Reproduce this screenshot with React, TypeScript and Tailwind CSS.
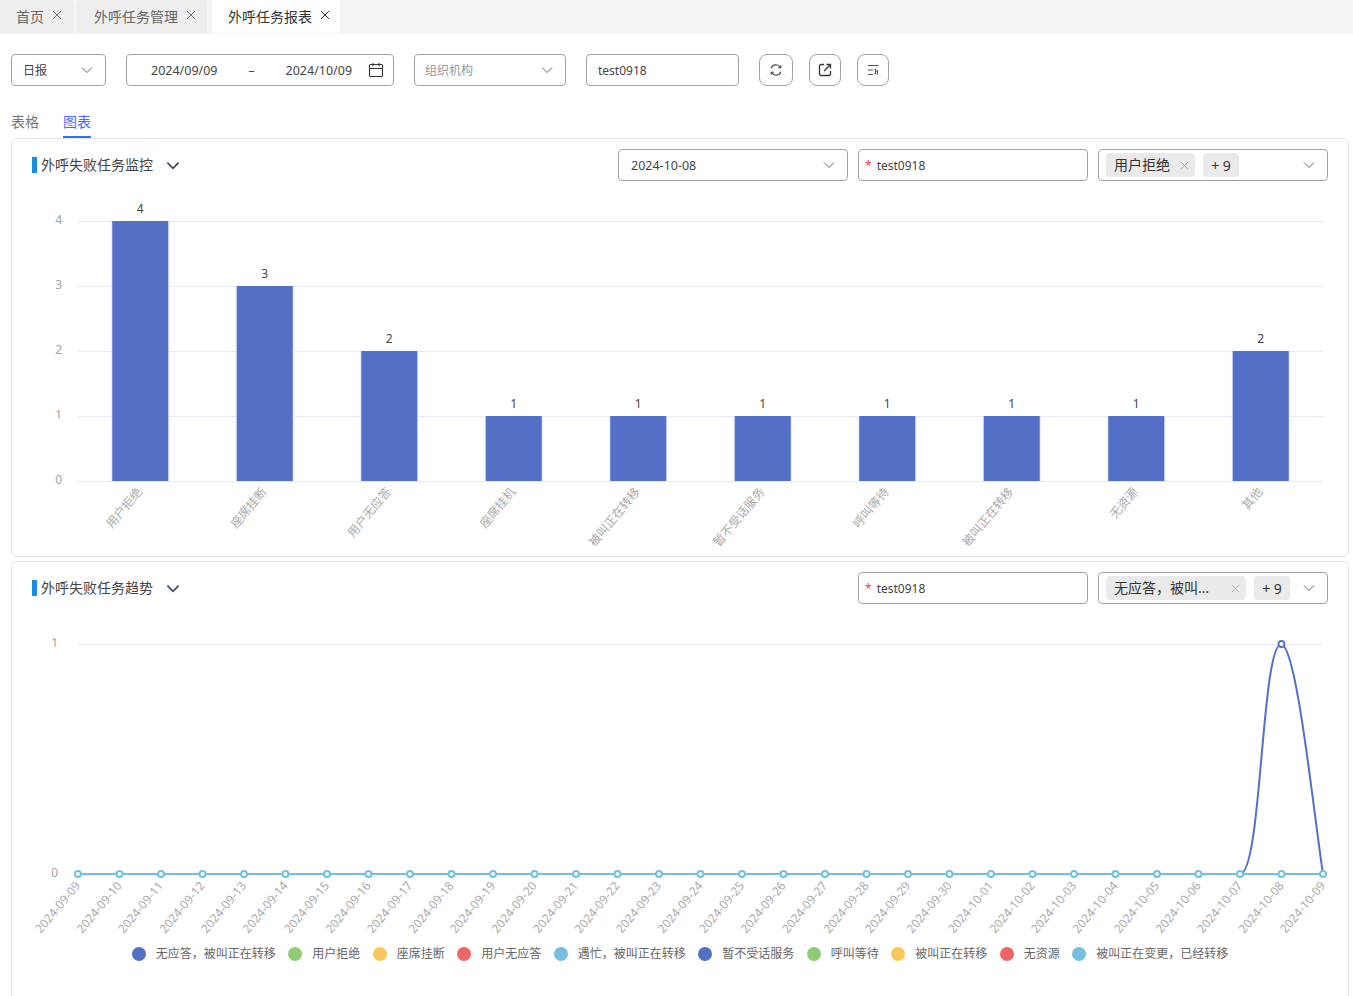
import React from "react";

const FONT = "font-['Noto_Sans','Noto_Sans_CJK_SC',sans-serif]";

const Chevron = ({ className = "w-3 h-3 text-[#666]" }: { className?: string }) => (
  <svg viewBox="0 0 12 8" fill="none" stroke="currentColor" strokeWidth="1" className={className}>
    <path d="M1 1.5 6 6.500 11 1.500" />
  </svg>
);

const Close = ({ className = "w-[10px] h-[10px] text-[#666]" }: { className?: string }) => (
  <svg viewBox="0 0 10 10" fill="none" stroke="currentColor" strokeWidth="1" className={className}>
    <path d="M1 1 9 9M9 1 1 9" />
  </svg>
);

const Tab = ({ label, active, w, pad }: { label: string; active?: boolean; w: string; pad: string }) => (
  <div className={`h-[33px] rounded-t-[3px] flex items-center ${w} ${pad} ${active ? "bg-white text-[#333]" : "bg-[#eeeeee] text-[#666]"}`}>
    <span className="text-[14px] leading-none">{label}</span>
    <Close className={`ml-[8px] w-[10px] h-[10px] -mt-[4px] ${active ? "text-[#333]" : "text-[#777]"}`} />
  </div>
);

const Box = ({ w, className = "", children }: { w: string; className?: string; children: React.ReactNode }) => (
  <div className={`h-8 ${w} border border-[#a3a3a3] rounded-[4px] flex items-center bg-white text-[12px] text-[#444] ${className}`}>{children}</div>
);

const Txt = ({ className = "", children }: { className?: string; children: React.ReactNode }) => (
  <span className={`mt-[2px] ${className}`}>{children}</span>
);

const IconBtn = ({ w, children }: { w: string; children: React.ReactNode }) => (
  <div className={`h-8 ${w} border border-[#a3a3a3] rounded-[8px] flex items-center justify-center text-[#333]`}>{children}</div>
);

const Tag = ({ children, className = "" }: { children: React.ReactNode; className?: string }) => (
  <div className={`h-6 rounded-[4px] bg-[#eaeaea] flex items-center text-[14px] text-[#333] ${className}`}>{children}</div>
);

const Title = ({ label }: { label: string }) => (
  <div className="flex items-center">
    <div className="w-[5px] h-4 bg-[#1d8ce0]" />
    <span className="ml-1 -mt-[2px] text-[14px] text-[#444]">{label}</span>
    <Chevron className="ml-[13px] w-[14px] h-[9px] text-[#3b4a5a] [&>path]:[stroke-width:1.5]" />
  </div>
);

const Required = () => (
  <Box w="w-[230px]" className="pl-[6px]">
    <span className="text-[#f04040] text-[12px] mr-[5px] leading-none mt-[2px]">*</span>
    <Txt>test0918</Txt>
  </Box>
);

const barData = [
  ["用户拒绝", 4], ["座席挂断", 3], ["用户无应答", 2], ["座席挂机", 1], ["被叫正在转移", 1],
  ["暂不受话服务", 1], ["呼叫等待", 1], ["被叫正在转移", 1], ["无资源", 1], ["其他", 2],
] as const;

const BarChart = () => (
  <svg viewBox="12 182 1336 374" className="w-[1336px] h-[374px] block" fontFamily="'Noto Sans','Noto Sans CJK SC',sans-serif">
    {[0, 1, 2, 3, 4].map((v) => {
      const y = 481 - v * 65;
      return (
        <g key={v}>
          <line x1="78" x2="1323" y1={y + 0.5} y2={y + 0.5} stroke="#e8e9f6" />
          <text x="62" y={y + 3} textAnchor="end" fontSize="12" fill="#a3a3a3">{v}</text>
        </g>
      );
    })}
    {barData.map(([name, v], i) => {
      const cx = 140.25 + i * 124.5;
      const top = 481 - v * 65;
      return (
        <g key={i}>
          <rect x={cx - 29} y={top} width="58" height={481 - top + 1} fill="#e4e9f8" />
          <rect x={cx - 28} y={top} width="56" height={481 - top} fill="#5470c6" />
          <text x={cx} y={top - 8} textAnchor="middle" fontSize="12" fill="#444">{v}</text>
          <text transform={`translate(${cx + 2.5} 492) rotate(-50)`} textAnchor="end" fontSize="12" fill="#aaa">{name}</text>
        </g>
      );
    })}
  </svg>
);

const dates: string[] = [];
for (let d = 9; d <= 30; d++) dates.push(`2024-09-${String(d).padStart(2, "0")}`);
for (let d = 1; d <= 9; d++) dates.push(`2024-10-${String(d).padStart(2, "0")}`);

const LineChart = () => (
  <svg viewBox="12 622 1336 316" className="w-[1336px] h-[316px] block" fontFamily="'Noto Sans','Noto Sans CJK SC',sans-serif">
    <line x1="78" x2="1323" y1="644.5" y2="644.5" stroke="#e8e9f2" />
    <text x="58" y="647" textAnchor="end" fontSize="12" fill="#a3a3a3">1</text>
    <text x="58" y="877" textAnchor="end" fontSize="12" fill="#a3a3a3">0</text>
    <path d="M1240 874C1262 874 1261 644 1281.500 644C1297 650 1312 800 1323 874" fill="none" stroke="#5470c6" strokeWidth="2" />
    <circle cx="1281.500" cy="644" r="3" fill="#fff" stroke="#5470c6" strokeWidth="1.8" />
    <line x1="78" x2="1323" y1="874" y2="874" stroke="#73c0de" strokeWidth="2" />
    {dates.map((d, i) => {
      const x = 78 + i * 41.5;
      return (
        <g key={d}>
          <circle cx={x} cy="874" r="3" fill="#fff" stroke="#73c0de" strokeWidth="2" />
          <text transform={`translate(${x + 3} 886) rotate(-50)`} textAnchor="end" fontSize="12" fill="#aaa">{d}</text>
        </g>
      );
    })}
  </svg>
);

const legend: [string, string][] = [
  ["无应答，被叫正在转移", "bg-[#5470c6]"],
  ["用户拒绝", "bg-[#91cc75]"],
  ["座席挂断", "bg-[#fac858]"],
  ["用户无应答", "bg-[#ee6666]"],
  ["遇忙，被叫正在转移", "bg-[#73c0de]"],
  ["暂不受话服务", "bg-[#5470c6]"],
  ["呼叫等待", "bg-[#91cc75]"],
  ["被叫正在转移", "bg-[#fac858]"],
  ["无资源", "bg-[#ee6666]"],
  ["被叫正在变更，已经转移", "bg-[#73c0de]"],
];

export default function App() {
  return (
    <div className={`${FONT} w-[1353px] h-[996px] overflow-hidden bg-white`}>
      <div className="h-[34px] bg-[#f5f5f5] flex gap-1 items-start">
        <Tab label="首页" w="w-[73px]" pad="pl-4" />
        <Tab label="外呼任务管理" w="w-[130px]" pad="pl-[17px]" />
        <Tab label="外呼任务报表" w="w-[128px] ml-[1px]" pad="pl-4" active />
      </div>

      <div className="flex items-center mt-5 pl-[11px] h-8">
        <Box w="w-[95px]" className="pl-[11px] pr-3 justify-between"><Txt>日报</Txt><Chevron /></Box>
        <Box w="w-[268px]" className="ml-5 pl-6 pr-[9px]">
          <Txt className="text-[12.5px]">2024/09/09</Txt>
          <Txt className="ml-[31px]">–</Txt>
          <Txt className="ml-[31px] text-[12.5px]">2024/10/09</Txt>
          <svg viewBox="0 0 16 16" fill="none" stroke="currentColor" strokeWidth="1.1" className="ml-auto w-4 h-4 text-[#333]">
            <rect x="1.5" y="2.5" width="13" height="12" rx="1" />
            <path d="M1.500 6.500h13M5 1v3M11 1v3" />
          </svg>
        </Box>
        <Box w="w-[152px]" className="ml-5 pl-[10px] pr-3 justify-between text-[#999]"><Txt>组织机构</Txt><Chevron /></Box>
        <Box w="w-[153px]" className="ml-5 pl-[11px]"><Txt>test0918</Txt></Box>
        <div className="ml-5"><IconBtn w="w-[34px]">
          <svg viewBox="0 0 14 14" fill="none" stroke="currentColor" strokeWidth="1.1" className="w-[14px] h-[14px] text-[#444]">
            <path d="M2.200 5.200A5 5 0 0 1 11.300 4.400M11.800 8.800A5 5 0 0 1 2.700 9.600" />
            <path d="M11.800 2.200V4.800H9.200M2.200 11.800V9.200H4.800" />
          </svg>
        </IconBtn></div>
        <div className="ml-4"><IconBtn w="w-8">
          <svg viewBox="0 0 14 14" fill="none" stroke="currentColor" strokeWidth="1.3" className="w-[14px] h-[14px]">
            <path d="M6 1.500H3A1.500 1.500 0 0 0 1.500 3v8A1.500 1.500 0 0 0 3 12.500h8a1.500 1.500 0 0 0 1.500-1.500V8" />
            <path d="M6 8 12.300 1.700M8.500 1.500h4v4" />
          </svg>
        </IconBtn></div>
        <div className="ml-4"><IconBtn w="w-8">
          <svg viewBox="0 0 14 14" fill="none" stroke="currentColor" strokeWidth="1" className="w-[14px] h-[14px] text-[#555]">
            <path d="M2 2.500h10.500M2 7h5M2 11.500h5" />
            <path d="M8.500 6.500l3.500 3M9.500 6v5M11.500 7v4.500M8.500 10l1.500 1.500" />
          </svg>
        </IconBtn></div>
      </div>

      <div className="mt-[25px] pl-[11px] flex gap-6 h-[27px] text-[14px] leading-[22px]">
        <span className="text-[#777]">表格</span>
        <span className="text-[#4a6cf7] border-b-2 border-[#3a6df0] h-[27px]">图表</span>
      </div>

      <div className="mx-[11px] w-[1338px] h-[419px] border border-[#e3e3e3] rounded-[6px]">
        <div className="h-8 pt-[10px] pl-5 pr-5 mb-px flex items-center justify-between box-content">
          <Title label="外呼失败任务监控" />
          <div className="flex gap-[10px]">
            <Box w="w-[230px]" className="pl-3 pr-3 justify-between"><Txt className="text-[12.5px]">2024-10-08</Txt><Chevron /></Box>
            <Required />
            <Box w="w-[230px]" className="pl-[7px] pr-3">
              <Tag className="pl-2 pr-[6px]">
                <span className="-mt-[2px]">用户拒绝</span>
                <Close className="ml-[10px] w-[9px] h-[9px] text-[#7fb4e4]" />
              </Tag>
              <Tag className="ml-2 w-9 justify-center">+ 9</Tag>
              <Chevron className="ml-auto w-3 h-3 text-[#666]" />
            </Box>
          </div>
        </div>
        <BarChart />
      </div>

      <div className="mt-[4px] mx-[11px] w-[1338px] h-[500px] border border-[#e3e3e3] rounded-[6px]">
        <div className="h-8 pt-[10px] pl-5 pr-5 mb-[18px] flex items-center justify-between box-content">
          <Title label="外呼失败任务趋势" />
          <div className="flex gap-[10px]">
            <Required />
            <Box w="w-[230px]" className="pl-[7px] pr-3">
              <Tag className="pl-2 pr-[6px] w-[140px]">
                <span className="-mt-[2px]">无应答，被叫…</span>
                <Close className="ml-auto w-[9px] h-[9px] text-[#7fb4e4]" />
              </Tag>
              <Tag className="ml-2 w-9 justify-center">+ 9</Tag>
              <Chevron className="ml-auto w-3 h-3 text-[#666]" />
            </Box>
          </div>
        </div>
        <LineChart />
        <div className="flex justify-center gap-[12.5px] mt-[7px]">
          {legend.map(([t, c], i) => (
            <div key={i} className="flex items-center gap-[10px] h-[18px]">
              <span className={`w-[14px] h-[14px] rounded-full ${c}`} />
              <span className="text-[12px] leading-none text-[#666]">{t}</span>
            </div>
          ))}
        </div>
      </div>
    </div>
  );
}
